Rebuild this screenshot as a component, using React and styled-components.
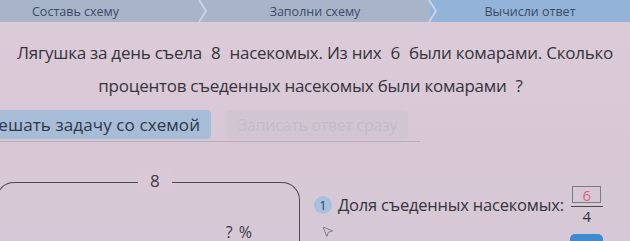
import React from 'react';
import styled, { createGlobalStyle } from 'styled-components';
import { MousePointer2 } from 'lucide-react';

const GlobalStyle = createGlobalStyle`
  html, body {
    margin: 0;
    padding: 0;
    background: #d9cad7;
    overflow: hidden;
  }
  body {
    font-family: "Open Sans", "Noto Sans", sans-serif;
    color: #3a3840;
  }
`;

const Page = styled.div`
  width: 630px;
  height: 241px;
  overflow: hidden;
  background: linear-gradient(180deg, #dccbd8 0%, #d8c8d5 60%, #d6c8d6 100%);
`;

const StepBar = styled.div`
  display: flex;
  height: 22px;
  background: #a8b5c9;
`;

const Step = styled.div`
  position: relative;
  width: ${(p) => p.width}px;
  display: flex;
  align-items: center;
  justify-content: ${(p) => (p.left ? 'flex-start' : 'center')};
  padding-left: ${(p) => (p.left ? '32px' : '0')};
  box-sizing: border-box;
  font-size: 12.5px;
  color: #3c4a66;
  white-space: nowrap;
  background: ${(p) => (p.active ? '#93b3d8' : 'transparent')};
`;

const Chevron = styled.svg`
  position: absolute;
  right: -8px;
  top: 0;
  z-index: 1;
`;

const Question = styled.div`
  padding-top: 14px;
  text-align: center;
  font-family: "Open Sans", sans-serif;
  font-size: 17px;
  line-height: 33px;
  letter-spacing: -0.25px;
  color: #35343b;
  height: 88px;
  box-sizing: border-box;
  white-space: nowrap;
`;

const Num = styled.span`
  margin: 0 9px;
`;

const Modes = styled.div`
  display: flex;
  gap: 15px;
  width: 444px;
  margin-left: -24px;
  padding-bottom: 2px;
  border-bottom: 1px solid #b9adbb;
`;

const ModeButton = styled.div`
  flex-shrink: 0;
  height: 29px;
  display: flex;
  align-items: center;
  padding: 0 11px 0 12px;
  font-size: ${(p) => (p.active ? '17px' : '16px')};
  letter-spacing: ${(p) => (p.active ? '0.1px' : '-0.3px')};
  white-space: nowrap;
  border-radius: 4px;
  background: ${(p) => (p.active ? '#a7bcd7' : '#d2c5d2')};
  color: ${(p) => (p.active ? '#2f3747' : '#c6b9c8')};
`;

const Work = styled.div`
  display: flex;
  margin-top: 40px;
`;

const Scheme = styled.div`
  position: relative;
  width: 304px;
  height: 70px;
  margin-left: -4px;
  border: 1.5px solid #4a4750;
  border-bottom: none;
  border-radius: 18px 18px 0 0;
  box-sizing: border-box;
  display: flex;
  justify-content: flex-end;
  align-items: flex-start;
  padding: 39px 46px 0 0;
`;

const SchemeLabel = styled.span`
  position: absolute;
  top: -12px;
  left: 141px;
  padding: 0 12px;
  background: #d9c9d6;
  font-size: 17px;
  line-height: 20px;
  color: #3a3840;
`;

const Unknown = styled.span`
  font-size: 16px;
  line-height: 20px;
  letter-spacing: 1px;
  color: #3a3840;
`;

const Solve = styled.div`
  position: relative;
  flex: 1;
  padding-left: 14px;
`;

const Row = styled.div`
  display: flex;
  align-items: flex-start;
`;

const Caption = styled.div`
  display: flex;
  align-items: center;
  margin-top: 11px;
  height: 23px;
`;

const Badge = styled.span`
  width: 18px;
  height: 18px;
  border-radius: 50%;
  background: #a6c0dd;
  color: #39465c;
  font-size: 13px;
  display: flex;
  align-items: center;
  justify-content: center;
  margin-right: 6px;
`;

const Label = styled.span`
  font-size: 16.5px;
  line-height: 23px;
  letter-spacing: -0.2px;
  color: #35343b;
`;

const Fraction = styled.div`
  display: flex;
  flex-direction: column;
  align-items: center;
  margin-left: 7px;
  margin-top: 4px;
`;

const Box = styled.div`
  width: 27px;
  height: 15px;
  border: 1.5px solid #7c7a84;
  display: flex;
  align-items: center;
  justify-content: center;
  color: #d46a78;
  font-size: 15px;
`;

const Bar = styled.div`
  width: 32px;
  height: 1.5px;
  background: #4a4750;
  margin: 2.5px 0 1px;
`;

const Denom = styled.div`
  font-size: 15px;
  line-height: 17px;
  color: #35343b;
`;

const Cursor = styled.div`
  position: absolute;
  left: 21px;
  top: 39px;
  color: #6b6d78;
`;

const ActionButton = styled.div`
  position: absolute;
  left: 270px;
  top: 52px;
  width: 33px;
  height: 14px;
  border-radius: 5px 5px 0 0;
  background: #3d8bd0;
`;

const App = () => (
  <Page>
    <GlobalStyle />
    <StepBar>
      <Step width={200} left>
        Составь схему
        <Chevron width="10" height="22" viewBox="0 0 10 22">
          <path d="M1 0 L8 11 L1 22" stroke="#c9d3e2" strokeWidth="2" fill="none" />
        </Chevron>
      </Step>
      <Step width={230}>
        Заполни схему
        <Chevron width="10" height="22" viewBox="0 0 10 22">
          <path d="M1 0 L8 11 L1 22" stroke="#c9d3e2" strokeWidth="2" fill="none" />
        </Chevron>
      </Step>
      <Step width={200} active>
        Вычисли ответ
      </Step>
    </StepBar>
    <Question>
      Лягушка за день съела<Num>8</Num>насекомых. Из них<Num>6</Num>были комарами. Сколько
      <br />
      процентов съеденных насекомых были комарами<Num>?</Num>
    </Question>
    <Modes>
      <ModeButton active>Решать задачу со схемой</ModeButton>
      <ModeButton>Записать ответ сразу</ModeButton>
    </Modes>
    <Work>
      <Scheme>
        <SchemeLabel>8</SchemeLabel>
        <Unknown>? %</Unknown>
      </Scheme>
      <Solve>
        <Row>
          <Caption>
            <Badge>1</Badge>
            <Label>Доля съеденных насекомых:</Label>
          </Caption>
          <Fraction>
            <Box>6</Box>
            <Bar />
            <Denom>4</Denom>
          </Fraction>
        </Row>
        <Cursor>
          <MousePointer2 size={13} strokeWidth={1.5} />
        </Cursor>
        <ActionButton />
      </Solve>
    </Work>
  </Page>
);

export default App;
